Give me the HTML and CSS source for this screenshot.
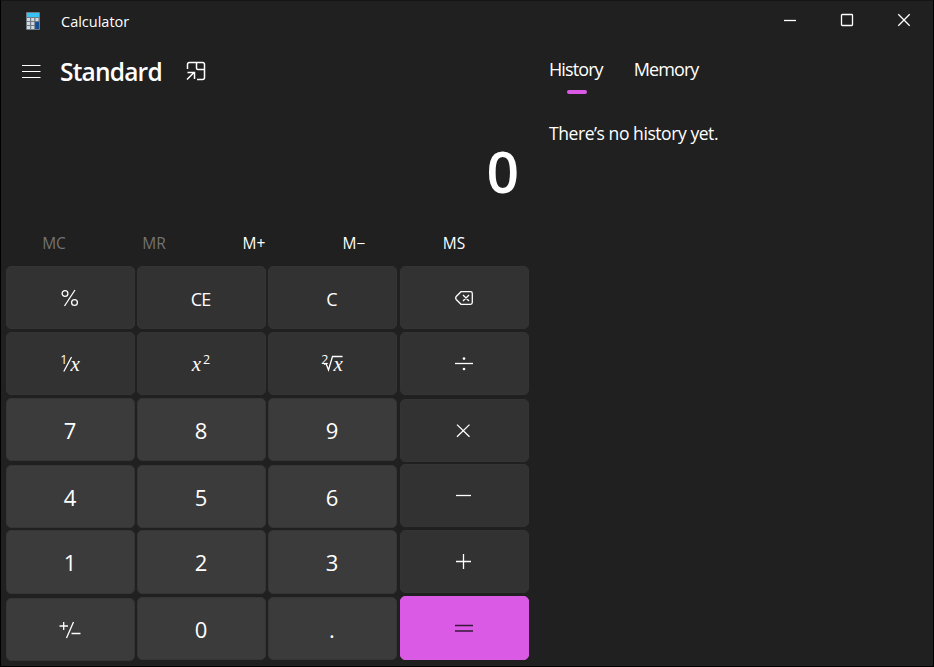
FILE: index.html
```html
<!DOCTYPE html>
<html lang="en">
<head>
<meta charset="utf-8">
<title>Calculator</title>
<link rel="stylesheet" href="styles.css">
</head>
<body>
<div class="window">
  <header class="titlebar">
    <svg class="app-icon" width="14" height="18" viewBox="0 0 14 18">
      <rect width="14" height="18" rx="1" fill="#6f7c86"/>
      <rect x="1" y="1" width="12" height="4" fill="#35c4f5"/>
      <g fill="#d3d8dc"><rect x="1" y="6" width="3" height="3"/><rect x="5.2" y="6" width="3" height="3"/><rect x="9.5" y="6" width="3" height="3"/><rect x="1" y="10" width="3" height="3"/><rect x="5.2" y="10" width="3" height="3"/><rect x="1" y="14" width="3" height="3"/><rect x="5.2" y="14" width="3" height="3"/></g>
      <rect x="9.2" y="10" width="3.8" height="7" fill="#124f93"/>
    </svg>
    <span class="app-name">Calculator</span>
    <div class="window-controls">
      <svg width="14" height="14" viewBox="0 0 14 14"><path d="M1 7.5H13"/></svg>
      <svg width="14" height="14" viewBox="0 0 14 14"><rect x="1.5" y="1.5" width="11" height="11" rx=".8"/></svg>
      <svg width="14" height="14" viewBox="0 0 14 14"><path d="M1.3 1.3L12.7 12.7M12.7 1.3L1.3 12.7"/></svg>
    </div>
  </header>
  <main class="content">
    <section class="calculator">
      <div class="mode">
        <svg class="menu" width="18" height="14" viewBox="0 0 18 14"><path d="M0 1.5H18.500M0 7.5H18.500M0 13.5H18.500"/></svg>
        <h1>Standard</h1>
        <svg class="keep-top" width="20" height="20" viewBox="0 0 20 20"><path d="M1.5 8V3.5Q1.5 1.5 3.5 1.5H16.5Q18.5 1.5 18.5 3.5V16.5Q18.5 18.5 16.5 18.5H11M10.5 1.5V7Q10.5 8.5 12 8.5H18.5M1 18.5L8 11.5M1.5 11.5H8.5V18"/></svg>
      </div>
      <div class="display"><span>0</span></div>
      <div class="memory-row">
        <span class="off">MC</span><span class="off">MR</span><span>M+</span><span>M−</span><span>MS</span>
      </div>
      <div class="keypad">
        <div class="column first">
          <button class="op percent"><svg width="18" height="18" viewBox="0 0 18 18"><circle cx="4" cy="4.5" r="2.9"/><circle cx="13.5" cy="13.5" r="2.9"/><path d="M14 1L3.5 17"/></svg></button>
          <button class="op recip"><sup>1</sup><svg width="9" height="16" viewBox="0 0 9 16"><path d="M8.5 1L.8 15.5"/></svg><i>x</i></button>
          <button><span>7</span></button>
          <button><span>4</span></button>
          <button><span>1</span></button>
          <button><svg class="sign" width="22" height="18" viewBox="0 0 22 18"><path d="M.5 5H9M4.7 1V9M14.5 1L7.5 17M12.5 12.5H21.5"/></svg></button>
        </div>
        <div class="column">
          <button class="op word"><span>CE</span></button>
          <button class="op square"><i>x</i><sup>2</sup></button>
          <button><span>8</span></button>
          <button><span>5</span></button>
          <button><span>2</span></button>
          <button><span>0</span></button>
        </div>
        <div class="column">
          <button class="op word"><span>C</span></button>
          <button class="op root"><sup>2</sup><svg width="18" height="17" viewBox="0 0 18 17"><path d="M0 9.5L2 8.5L4.5 15L8.5 1.5H18.5"/></svg><i>x</i></button>
          <button><span>9</span></button>
          <button><span>6</span></button>
          <button><span>3</span></button>
          <button><span>.</span></button>
        </div>
        <div class="column operators">
          <button class="op"><svg width="18" height="14" viewBox="0 0 18 14"><path d="M6 .7H15.5Q17.3 .7 17.3 2.5V11.5Q17.3 13.3 15.5 13.3H6L1.2 8.5Q0 7 1.2 5.5ZM8 4L14 10M14 4L8 10"/></svg></button>
          <button class="op"><svg width="18" height="14" viewBox="0 0 18 14"><path d="M0 6.5H18"/><g class="dots"><circle cx="9" cy="1.6" r="1.3"/><circle cx="9" cy="12" r="1.3"/></g></svg></button>
          <button class="op"><svg width="18" height="14" viewBox="0 0 18 14"><path d="M2 .6L14.5 12.7M14.5 .6L2 12.7"/></svg></button>
          <button class="op"><svg width="18" height="14" viewBox="0 0 18 14"><path d="M1 6.5H16"/></svg></button>
          <button class="op"><svg width="18" height="16" viewBox="0 0 18 16"><path d="M1 7.5H16M8.5 0V15"/></svg></button>
          <button class="equals"><svg width="18" height="9" viewBox="0 0 18 9"><path d="M0 1.5H18M0 7H18"/></svg></button>
        </div>
      </div>
    </section>
    <aside class="side">
      <nav class="tabs"><span class="active">History</span><span>Memory</span></nav>
      <p>There’s no history yet.</p>
    </aside>
  </main>
</div>
</body>
</html>
```
FILE: styles.css
```css
* { box-sizing: border-box; }
body { margin: 0; background: #202020; color: #fff; font-family: "Open Sans", "Noto Sans", sans-serif; }
svg { display: block; flex: none; fill: none; stroke: #fff; stroke-width: 1.3; overflow: visible; }
.window { width: 934px; height: 667px; border: 1px solid #000; border-top-color: #151515; background: #202020; overflow: hidden; }
.titlebar { height: 40px; display: flex; align-items: center; padding: 0 22px 0 25px; }
.app-icon { stroke: none; }
.app-name { margin: 2px 0 0 21px; font-size: 14.5px; line-height: 20px; }
.window-controls { margin: -2px 0 0 auto; display: flex; gap: 43px; }
.content { display: flex; }
.calculator { width: 548px; }
.mode { height: 60px; display: flex; align-items: center; padding: 0 0 0 21px; }
.menu { stroke-width: 1.2; }
h1 { margin: 1px 0 0 20px; width: 102px; font-size: 24.5px; line-height: 34px; font-weight: 600; letter-spacing: -.8px; white-space: nowrap; }
.keep-top { margin-left: 24px; stroke-width: 1.5; }
.display { height: 120px; padding: 29px 30px 0 0; text-align: right; font-size: 57px; line-height: 82px; font-weight: 600; }
.memory-row { display: flex; padding-left: 3px; height: 45px; }
.memory-row span { width: 100px; text-align: center; font-size: 15.5px; line-height: 44px; }
.memory-row .off { color: #737373; }
.keypad { display: flex; gap: 2px; padding-left: 5px; }
.column { display: flex; flex-direction: column; gap: 3px; width: 129px; }
.operators { margin-left: 1px; }
button { display: flex; align-items: center; justify-content: center; width: 129px; height: 63px; flex: none; margin: 0; padding: 0 1px 0 0; border: 1px solid #353535; border-radius: 5px; background: #3b3b3b; color: #fff; font: 22px/30px "Open Sans", "Noto Sans", sans-serif; }
button span { padding-top: 1px; }
.op { background: #323232; border-color: #343434; }
.column button:nth-child(4) { margin-top: 1px; }
.column button:nth-child(5) { margin-top: -1px; height: 64px; padding-bottom: 1px; }
.first button:nth-child(6) { margin-top: 1px; }
.operators button:nth-child(3) { margin-top: 1px; }
.operators button:nth-child(4) { margin-top: -1px; }
.operators button:nth-child(5) { margin-top: 0; height: 63px; padding-bottom: 0; }
.word { font-size: 18px; letter-spacing: -.8px; padding-right: 2px; }
.word span { padding-top: 2px; }
button i { font: italic 21px/24px "Liberation Serif", serif; }
button sup { font-size: 12.5px; line-height: 14px; align-self: flex-start; margin-top: 20px; }
.recip sup { margin-right: -4px; }
.recip i { margin-left: -2px; }
.square sup { margin-left: 2px; }
.root sup { margin-right: -4px; }
.root i { margin-left: -9px; margin-top: 1px; }
.dots { fill: #fff; stroke: none; }
.equals { height: 64px; background: #db5ae5; border-color: #db5ae5; }
.equals svg { stroke: #35183a; }
.side { padding-top: 14px; }
.tabs { display: flex; gap: 31px; font-size: 18px; line-height: 28px; letter-spacing: -.9px; }
.active { position: relative; }
.active::after { content: ""; position: absolute; left: 18px; top: 35px; width: 20px; height: 4px; border-radius: 2px; background: #db5ae5; }
p { margin: 35px 0 0; font-size: 17.5px; line-height: 31px; letter-spacing: -.43px; }
```
